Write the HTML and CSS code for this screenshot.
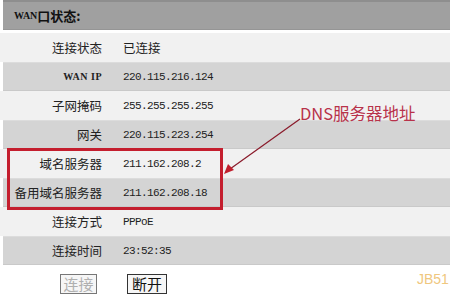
FILE: index.html
```html
<!DOCTYPE html>
<html lang="zh">
<head>
<meta charset="utf-8">
<link rel="stylesheet" href="styles.css">
</head>
<body>
<div class="panel">
  <div class="head"><span class="wan">WAN</span>口状态:</div>
  <div class="rows">
    <div class="row light"><span class="lbl">连接状态</span><span class="val cjk">已连接</span></div>
    <div class="row dark"><span class="lbl mono-lbl">WAN IP</span><span class="val">220.115.216.124</span></div>
    <div class="row light"><span class="lbl">子网掩码</span><span class="val">255.255.255.255</span></div>
    <div class="row dark"><span class="lbl">网关</span><span class="val">220.115.223.254</span></div>
    <div class="row light"><span class="lbl">域名服务器</span><span class="val">211.162.208.2</span></div>
    <div class="row dark"><span class="lbl">备用域名服务器</span><span class="val">211.162.208.18</span></div>
    <div class="row light"><span class="lbl">连接方式</span><span class="val">PPPoE</span></div>
    <div class="row dark"><span class="lbl">连接时间</span><span class="val">23:52:35</span></div>
  </div>
  <div class="btns">
    <button class="btn disabled">连接</button>
    <button class="btn">断开</button>
  </div>
  <div class="dns-box"></div>
  <div class="note">DNS服务器地址</div>
  <svg class="arrow" width="90" height="60" viewBox="0 0 90 60">
    <line x1="78" y1="2" x2="8" y2="52" stroke="#8a1a2a" stroke-width="1.2"/>
    <polygon points="2,57 6,47 12,53" fill="#c0202e"/>
  </svg>
  <div class="mark">JB51</div>
</div>
</body>
</html>
```

FILE: styles.css
```css
* { box-sizing: border-box; }
html, body { margin: 0; padding: 0; background: #ffffff; }
body {
  width: 450px;
  height: 296px;
  overflow: hidden;
  font-family: "Noto Sans CJK SC", "Liberation Sans", sans-serif;
  color: #1a1a1a;
}
.panel { position: relative; width: 450px; height: 296px; overflow: hidden; }
.head {
  height: 30px;
  margin-left: 3px;
  background: #a0a0a0;
  border-top: 2px solid #8e8e8e;
  border-bottom: 1px solid #959595;
  display: flex;
  align-items: center;
  padding-left: 11px;
  font-size: 13px;
  font-weight: bold;
  color: #111;
  margin-bottom: 3px;
}
.wan {
  font-family: "Liberation Serif", serif;
  font-size: 10px;
  font-weight: bold;
}
.rows { display: flex; flex-direction: column; }
.row {
  height: 29px;
  display: flex;
  align-items: center;
  gap: 21px;
}
.row.light { background: #f1f1f1; }
.row.dark {
  background: #d4d4d4;
  margin-left: 3px;
  border-top: 1px solid #dcdcdc;
  border-bottom: 1px solid #c9c9c9;
}
.lbl {
  width: 102px;
  text-align: right;
  font-size: 12.5px;
  color: #222;
  white-space: nowrap;
}
.row.dark .lbl { width: 99px; }
.mono-lbl {
  font-family: "Liberation Serif", serif;
  font-size: 10px;
  font-weight: bold;
  letter-spacing: 0.5px;
}
.val {
  font-family: "Liberation Mono", monospace;
  font-size: 11px;
  letter-spacing: -0.6px;
  color: #222;
}
.val.cjk { font-family: "Noto Sans CJK SC", sans-serif; font-size: 12.5px; letter-spacing: 0; }
.btns {
  display: flex;
  gap: 30px;
  padding-left: 60px;
  padding-top: 9px;
}
.btn {
  height: 20px;
  width: 40px;
  padding: 0;
  white-space: nowrap;
  font-family: "Noto Sans CJK SC", sans-serif;
  font-size: 15px;
  line-height: 16px;
  background: #f6f6f6;
  border: 1px solid #333;
  color: #111;
}
.btn.disabled { color: #b0b0b0; border-color: #777; width: 37px; }
.dns-box {
  position: absolute;
  left: 7px;
  top: 148px;
  width: 216px;
  height: 62px;
  border: 3px solid #c41e2e;
}
.note {
  position: absolute;
  left: 300px;
  top: 102px;
  font-size: 16.5px;
  color: #b8324a;
  line-height: 22px;
  white-space: nowrap;
}
.arrow { position: absolute; left: 222px; top: 117px; }
.mark {
  position: absolute;
  left: 417px;
  top: 271px;
  font-family: "Liberation Sans", sans-serif;
  font-size: 14px;
  color: #efc77e;
  white-space: nowrap;
}
```
